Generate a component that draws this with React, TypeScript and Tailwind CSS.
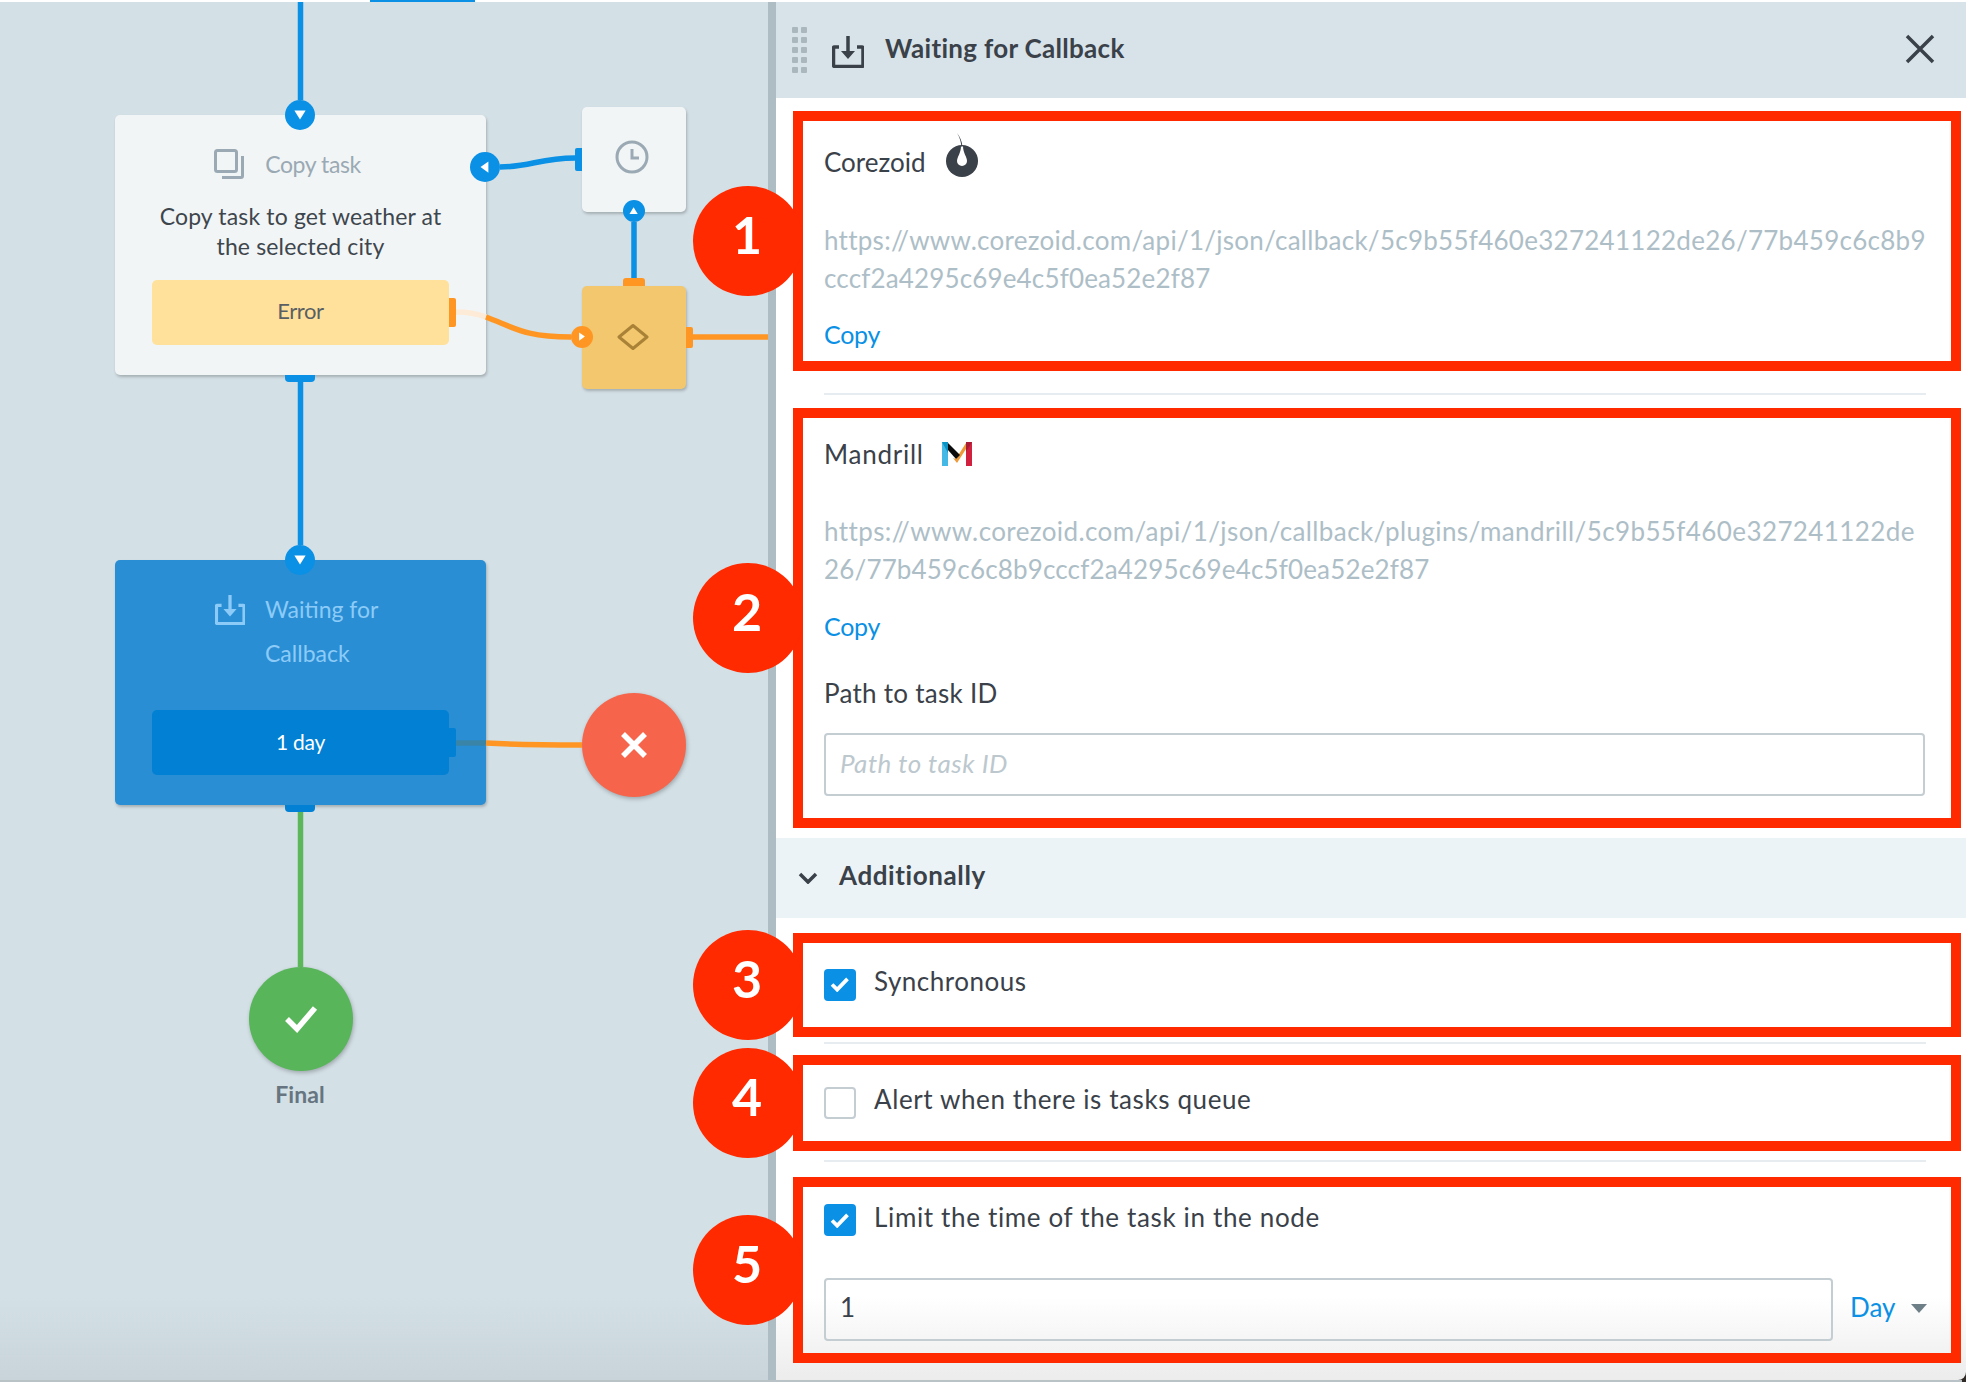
const URL_COREZOID = [
  { text: "https://www.corezoid.com/api/1/json/callback/5c9b55f460e327241122de26/77b459c6c8b9", spacing: "tracking-[0.27px]" },
  { text: "cccf2a4295c69e4c5f0ea52e2f87", spacing: "tracking-[0.15px]" },
];
const URL_MANDRILL = [
  { text: "https://www.corezoid.com/api/1/json/callback/plugins/mandrill/5c9b55f460e327241122de", spacing: "tracking-[0.4px]" },
  { text: "26/77b459c6c8b9cccf2a4295c69e4c5f0ea52e2f87", spacing: "tracking-[0.16px]" },
];

function DownloadIcon({ className }: { className: string }) {
  return (
    <svg viewBox="0 0 32 32" className={className} fill="none" stroke="currentColor" strokeWidth="3.500">
      <path d="M7 11H2.5a1 1 0 0 0-1 1v17a1.5 1.5 0 0 0 1.500 1.500h27a1 1 0 0 0 1-1V12a1 1 0 0 0-1-1H25" />
      <path d="M16 0v17" />
      <path d="M9 15h14l-7 8z" fill="currentColor" stroke="none" />
    </svg>
  );
}

function Dot({ className, dir, color = "bg-[#0a90e5]" }: { className: string; dir: "down" | "up" | "left" | "right"; color?: string }) {
  const points = { down: "3,4 13,4 8,12", up: "3,12 13,12 8,4", left: "11,3 11,13 4,8", right: "5,3 5,13 12,8" }[dir];
  return (
    <div className={`absolute flex items-center justify-center rounded-full ${color} ${className}`}>
      <svg viewBox="0 0 16 16" className="h-3/5 w-3/5">
        <polygon points={points} fill="#fff" />
      </svg>
    </div>
  );
}

function Canvas() {
  return (
    <div className="relative h-full w-[768px] shrink-0 bg-linear-to-b from-[#d3e0e6] from-[94%] to-[#c8d4da]">
      {/* copy task node */}
      <div className="absolute left-[115px] top-[115px] h-[260px] w-[371px] rounded-[5px] bg-[#f2f5f6] shadow-[1px_2px_3px_rgba(0,0,0,0.22)]">
        <div className="mt-[32px] flex items-center justify-center gap-[21px] pr-[26px] text-[23px] leading-[34px] tracking-[-0.4px] text-[#9aa9b3]">
          <svg viewBox="0 0 30 30" className="h-[30px] w-[30px]" fill="none" stroke="currentColor" strokeWidth="3">
            <rect x="1.500" y="1.500" width="21" height="21" rx="2" />
            <path d="M28.500 7v20a1.500 1.500 0 0 1-1.500 1.500H8" />
          </svg>
          <span>Copy task</span>
        </div>
        <p className="mt-[20px] text-center text-[23px] leading-[30px] tracking-[0.15px] text-[#3e464d]">
          Copy task to get weather at
          <br />
          the selected city
        </p>
        <div className="ml-[37px] mt-[19px] flex h-[65px] w-[297px] items-center justify-center rounded-[5px] bg-[#ffe19c] pb-[4px] text-[22px] tracking-[-0.4px] text-[#5a5f63]">
          Error
        </div>
      </div>
      <div className="absolute left-[449px] top-[298px] h-[29px] w-[7px] rounded-r-[2px] bg-[#ff9623]" />
      <div className="absolute left-[285px] top-[375px] h-[7px] w-[30px] rounded-b-[4px] bg-[#0a90e5]" />

      {/* timer + condition nodes */}
      <div className="absolute left-[582px] top-[107px] flex h-[105px] w-[104px] items-center justify-center rounded-[5px] bg-[#f2f5f6] pb-[5px] pr-[4px] shadow-[1px_2px_3px_rgba(0,0,0,0.22)]">
        <svg viewBox="0 0 34 34" className="h-[34px] w-[34px]" fill="none" stroke="#9aa9b3" strokeWidth="3">
          <circle cx="17" cy="17" r="15" />
          <path d="M17 9v9h7" />
        </svg>
      </div>
      <div className="absolute left-[575px] top-[148px] h-[23px] w-[7px] rounded-l-[2px] bg-[#0a90e5]" />
      <div className="absolute left-[582px] top-[286px] flex h-[103px] w-[104px] items-center justify-center rounded-[5px] bg-[#f2c76d] pb-[2px] pr-[2px] shadow-[1px_2px_3px_rgba(0,0,0,0.22)]">
        <svg viewBox="0 0 32 26" className="h-[26px] w-[32px]" fill="none" stroke="#a98237" strokeWidth="3" strokeLinejoin="round">
          <path d="M16 1.500L30 13 16 24.500 2 13z" />
        </svg>
      </div>
      <div className="absolute left-[623px] top-[278px] h-[8px] w-[22px] rounded-t-[3px] bg-[#ff9623]" />
      <div className="absolute left-[686px] top-[327px] h-[21px] w-[7px] rounded-r-[2px] bg-[#ff9623]" />

      {/* waiting node */}
      <div className="absolute left-[115px] top-[560px] h-[245px] w-[371px] rounded-[5px] bg-[#2a8ed4] shadow-[1px_2px_3px_rgba(0,0,0,0.22)]">
        <div className="ml-[150px] mt-[27px] flex text-[23px] leading-[44px] tracking-[0px] text-[#8ccbf7]">
          <div className="w-[120px]">Waiting for Callback</div>
        </div>
        <DownloadIcon className="absolute left-[100px] top-[35px] h-[30px] w-[30px] text-[#8ccbf7]" />
        <div className="ml-[37px] mt-[35px] flex h-[65px] w-[297px] items-center justify-center rounded-[5px] bg-[#0280d4] pb-[2px] text-[21px] tracking-[-0.3px] text-white">
          1 day
        </div>
      </div>
      <div className="absolute left-[449px] top-[728px] h-[29px] w-[7px] rounded-r-[2px] bg-[#0280d4]" />
      <div className="absolute left-[285px] top-[805px] h-[7px] w-[30px] rounded-b-[4px] bg-[#0280d4]" />

      {/* end nodes */}
      <div className="absolute left-[582px] top-[693px] flex h-[104px] w-[104px] items-center justify-center rounded-full bg-[#f6654b] shadow-[1px_2px_4px_rgba(0,0,0,0.25)]">
        <svg viewBox="0 0 28 28" className="h-[28px] w-[28px]" stroke="#fff" strokeWidth="5.500">
          <path d="M3 3l22 22M25 3L3 25" />
        </svg>
      </div>
      <div className="absolute left-[249px] top-[967px] flex h-[104px] w-[104px] items-center justify-center rounded-full bg-[#58b55a] shadow-[1px_2px_4px_rgba(0,0,0,0.25)]">
        <svg viewBox="0 0 34 28" className="h-[28px] w-[34px]" fill="none" stroke="#fff" strokeWidth="5.500">
          <path d="M3 14l10 10L31 3" />
        </svg>
      </div>
      <div className="absolute left-[200px] top-[1079px] w-[200px] text-center text-[23px] font-bold leading-[30px] tracking-[0.1px] text-[#66757f]">
        Final
      </div>

      {/* connections */}
      <svg className="absolute left-0 top-0" width="768" height="1380" fill="none" strokeWidth="5.500">
        <path d="M300.500 0V100M300.500 382V545" stroke="#0a90e5" />
        <path d="M634 222V278" stroke="#0a90e5" />
        <path d="M500 167C530 167 540 158 575 158" stroke="#0a90e5" />
        <path d="M300.500 812V967" stroke="#5cb65a" />
        <path d="M456 312C468 312 478 314 486 317" stroke="#fdebd8" />
        <path d="M486 317C515 328 525 337 571 337" stroke="#ff9623" />
        <path d="M693 337H768" stroke="#ff9623" />
        <path d="M456 743H486" stroke="#3a84a8" />
        <path d="M486 743C520 745 550 745 582 745" stroke="#ff9623" />
      </svg>

      <Dot className="left-[285px] top-[100px] h-[30px] w-[30px]" dir="down" />
      <Dot className="left-[470px] top-[152px] h-[30px] w-[30px]" dir="left" />
      <Dot className="left-[623px] top-[200px] h-[22px] w-[22px]" dir="up" />
      <Dot className="left-[571px] top-[326px] h-[22px] w-[22px]" dir="right" color="bg-[#ff9623]" />
      <Dot className="left-[285px] top-[545px] h-[30px] w-[30px]" dir="down" />
    </div>
  );
}

function CheckBox({ checked }: { checked: boolean }) {
  if (!checked) {
    return <div className="h-[32px] w-[32px] shrink-0 rounded-[4px] border-2 border-[#c4cdd2] bg-white" />;
  }
  return (
    <div className="flex h-[32px] w-[32px] shrink-0 items-center justify-center rounded-[4px] bg-[#0a90e5]">
      <svg viewBox="0 0 20 16" className="h-[15px] w-[20px]" fill="none" stroke="#fff" strokeWidth="4">
        <path d="M1.500 8l5.500 5.500L18 2" />
      </svg>
    </div>
  );
}

function CallbackUrl({ lines }: { lines: { text: string; spacing: string }[] }) {
  return (
    <div className="mt-[40px] whitespace-nowrap text-[26px] leading-[38px] text-[#adbec7]">
      {lines.map((line) => (
        <div key={line.text} className={line.spacing}>
          {line.text}
        </div>
      ))}
    </div>
  );
}

function Panel() {
  return (
    <div className="flex min-w-0 flex-1 flex-col bg-linear-to-b from-white from-[94%] to-[#ececec] text-[26px] text-[#3a4149]">
      <div className="flex h-[98px] shrink-0 items-center bg-[#d8e3e9]">
        <div className="ml-[16px] mt-[2px] grid grid-cols-2 gap-x-[3px] gap-y-[4px]">
          {Array.from({ length: 10 }, (_, i) => (
            <div key={i} className="h-[6px] w-[6px] rounded-[1px] bg-[#aab7bd]" />
          ))}
        </div>
        <DownloadIcon className="ml-[25px] mt-[6px] h-[32px] w-[32px] text-[#3a4149]" />
        <div className="ml-[21px] pb-[2px] text-[26px] font-bold tracking-[0.3px]">Waiting for Callback</div>
        <svg viewBox="0 0 30 30" className="ml-auto mr-[31px] h-[30px] w-[30px]" stroke="#3a4149" strokeWidth="3.500">
          <path d="M2 2l26 26M28 2L2 28" />
        </svg>
      </div>

      <section className="ml-[17px] mr-[5px] mt-[13px] h-[260px] border-[10px] border-[#ff2a00] pl-[21px] pt-[24px]">
        <div className="flex h-[36px] items-center">
          <span className="pb-[2px]">Corezoid</span>
          <svg viewBox="0 0 32 44" className="ml-[20px] mt-[-16px] h-[44px] w-[32px]">
            <circle cx="16" cy="28" r="16" fill="#3a4149" />
            <path d="M15 13C15 20 11 24 11 28A5 5 0 0 0 21 28C21 24 17 20 17 13z" fill="#fff" />
            <path d="M11 0C14 5 15 9 15.500 14L16.500 14C16 8 14 4 11 0z" fill="#3a4149" />
          </svg>
        </div>
        <CallbackUrl lines={URL_COREZOID} />
        <div className="mt-[19px] text-[25px] leading-[36px] tracking-[-0.3px] text-[#0a90e5]">Copy</div>
      </section>

      <div className="ml-[48px] mr-[40px] mt-[22px] h-[2px] bg-[#e6ecef]" />

      <section className="ml-[17px] mr-[5px] mt-[13px] h-[420px] border-[10px] border-[#ff2a00] pl-[21px] pr-[26px] pt-[18px]">
        <div className="flex h-[36px] items-center">
          <span className="tracking-[0.75px]">Mandrill</span>
          <svg viewBox="0 0 30 24" className="ml-[18px] h-[24px] w-[30px]">
            <path d="M0 0h6v24H0z" fill="#44b9e6" />
            <path d="M0 0h6v11z" fill="#0c93c4" />
            <path d="M24 1V7L15 21 11 16 14 17 17 12z" fill="#ee9a38" />
            <path d="M6 1L18 13 14 17 6 8z" fill="#0b0b0b" />
            <path d="M24 0h6v24h-6z" fill="#d2203f" />
            <path d="M24 10L30 0h-6z" fill="#a81c36" />
          </svg>
        </div>
        <CallbackUrl lines={URL_MANDRILL} />
        <div className="mt-[20px] text-[25px] leading-[36px] tracking-[-0.3px] text-[#0a90e5]">Copy</div>
        <div className="mt-[31px] leading-[36px] tracking-[0.27px]">Path to task ID</div>
        <div className="mt-[22px] flex h-[63px] items-center rounded-[4px] border-2 border-[#c4cdd2] pb-[3px] pl-[14px] italic tracking-[0.5px] text-[#bcc8ce]">
          Path to task ID
        </div>
      </section>

      <div className="mt-[10px] flex h-[80px] shrink-0 items-center bg-[#ecf3f6]">
        <svg viewBox="0 0 20 12" className="ml-[22px] h-[12px] w-[20px]" fill="none" stroke="#3a4149" strokeWidth="3.500">
          <path d="M2 2l8 8 8-8" />
        </svg>
        <div className="ml-[21px] pb-[5px] text-[26px] font-bold tracking-[0.6px]">Additionally</div>
      </div>

      <section className="ml-[17px] mr-[5px] mt-[15px] flex h-[104px] items-center gap-[18px] border-[10px] border-[#ff2a00] pb-[1px] pl-[21px]">
        <CheckBox checked />
        <span className="pb-[7px] tracking-[0.5px]">Synchronous</span>
      </section>

      <div className="ml-[48px] mr-[40px] mt-[5px] h-[2px] bg-[#e6ecef]" />

      <section className="ml-[17px] mr-[5px] mt-[11px] flex h-[96px] items-center gap-[18px] border-[10px] border-[#ff2a00] pb-[1px] pl-[21px]">
        <CheckBox checked={false} />
        <span className="pb-[7px] tracking-[0.6px]">Alert when there is tasks queue</span>
      </section>

      <div className="ml-[48px] mr-[40px] mt-[9px] h-[2px] bg-[#e6ecef]" />

      <section className="ml-[17px] mr-[5px] mt-[15px] h-[186px] border-[10px] border-[#ff2a00] pl-[21px] pt-[17px]">
        <div className="flex h-[32px] items-center gap-[18px]">
          <CheckBox checked />
          <span className="pb-[5px] tracking-[0.65px]">Limit the time of the task in the node</span>
        </div>
        <div className="mt-[42px] flex items-center">
          <div className="flex h-[63px] w-[1009px] items-center rounded-[4px] border-2 border-[#c4cdd2] pb-[5px] pl-[14px]">1</div>
          <span className="ml-[17px] pb-[5px] text-[#0a90e5]">Day</span>
          <svg viewBox="0 0 16 9" className="ml-[16px] mb-[2px] h-[9px] w-[16px]">
            <polygon points="0,0 16,0 8,9" fill="#6f7f88" />
          </svg>
        </div>
      </section>
    </div>
  );
}

function Badge({ n, className }: { n: number; className: string }) {
  return (
    <div className={`absolute left-[693px] flex h-[110px] w-[110px] items-center justify-center rounded-full bg-[#ff2a00] pb-[15px] pr-[2px] text-[52px] font-bold text-white ${className}`}>
      {n}
    </div>
  );
}

export default function App() {
  return (
    <div className="relative h-[1382px] w-[1966px] overflow-hidden bg-[#2f2a26] font-['Lato',sans-serif]">
      <div className="flex h-[1380px] overflow-hidden rounded-br-[8px]">
        <Canvas />
        <div className="h-full w-[8px] shrink-0 bg-[#aebdc4]" />
        <Panel />
      </div>
      <div className="absolute bottom-0 left-0 h-[2px] w-[1962px] bg-[#b9c2c7]" />
      <div className="absolute left-0 top-0 h-[2px] w-full bg-white" />
      <div className="absolute left-[370px] top-0 h-[2px] w-[105px] bg-[#0a90e5]" />
      <Badge n={1} className="top-[186px]" />
      <Badge n={2} className="top-[563px]" />
      <Badge n={3} className="top-[930px]" />
      <Badge n={4} className="top-[1048px]" />
      <Badge n={5} className="top-[1215px]" />
    </div>
  );
}
